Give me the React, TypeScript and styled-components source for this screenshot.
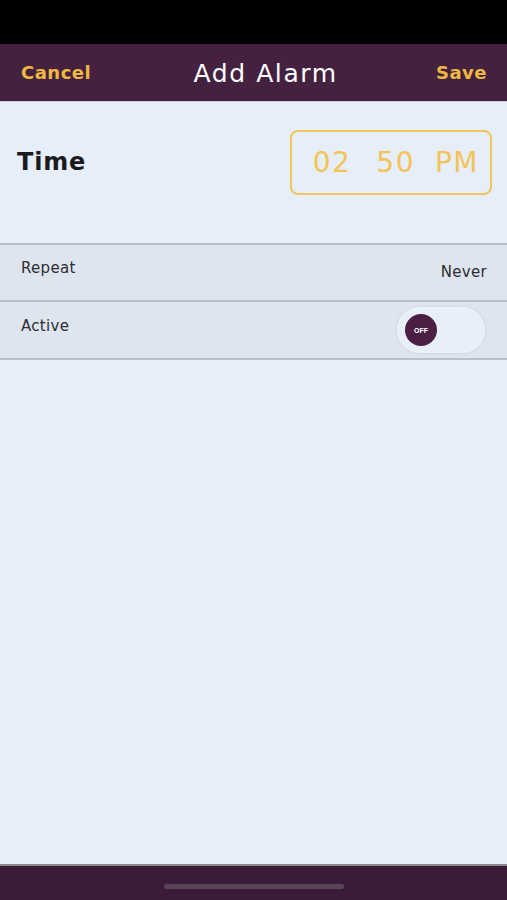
import React, { useState } from 'react'
import styled, { createGlobalStyle } from 'styled-components'

const GlobalStyle = createGlobalStyle`
  html, body {
    margin: 0;
    padding: 0;
    background: #e6eefa;
  }
  body {
    font-family: "DejaVu Sans", "Open Sans", sans-serif;
  }
`

const Screen = styled.div`
  width: 507px;
  height: 900px;
  display: flex;
  flex-direction: column;
  background: #e6eefa;
`

const StatusBar = styled.div`
  height: 44px;
  background: #000;
`

const Header = styled.div`
  height: 57px;
  background: #44223f;
  display: flex;
  align-items: center;
  justify-content: space-between;
  padding: 0 20px 0 21px;
  border-bottom: 1px solid #cfcfd6;
`

const HeaderButton = styled.span`
  color: #eeb843;
  font-size: 18px;
  font-weight: 700;
  letter-spacing: 0.5px;
`

const Title = styled.span`
  color: #fff;
  font-size: 25px;
  font-weight: 500;
  letter-spacing: 1.6px;
  margin-left: 4px;
  margin-top: 1px;
`

const Content = styled.div`
  flex: 1;
  display: flex;
  flex-direction: column;
`

const TimeRow = styled.div`
  height: 141px;
  display: flex;
  align-items: flex-start;
  justify-content: space-between;
  padding: 28px 15px 0 17px;
  box-sizing: border-box;
`

const TimeLabel = styled.span`
  font-size: 24px;
  font-weight: 700;
  color: #1b1b1f;
  margin-top: 18px;
  letter-spacing: 0.8px;
`

const TimeBox = styled.div`
  width: 202px;
  height: 65px;
  box-sizing: border-box;
  border: 2px solid #f2c45a;
  border-radius: 8px;
  display: flex;
  align-items: center;
  justify-content: flex-end;
  padding-right: 11px;
  color: #f3c355;
  font-family: "DejaVu Sans", sans-serif;
  font-size: 28px;
  font-weight: 400;
  letter-spacing: 1.5px;
`

const TimePart = styled.span<{ $gap?: number }>`
  margin-right: ${p => p.$gap ?? 0}px;
`

const SettingRow = styled.div`
  height: 57px;
  display: flex;
  align-items: center;
  justify-content: space-between;
  padding: 0 20px 0 21px;
  background: #dfe5ef;
  border-top: 2px solid #b9bfc8;
  box-sizing: border-box;
  &:last-child {
    border-bottom: 2px solid #b9bfc8;
    height: 60px;
  }
`

const RowLabel = styled.span<{ $offset?: number }>`
  font-size: 15px;
  color: #2d2d33;
  letter-spacing: 0.3px;
  transform: translateY(${p => p.$offset ?? 0}px);
`

const Toggle = styled.button`
  width: 88px;
  height: 46px;
  border: none;
  border-radius: 23px;
  background: #e9eff9;
  box-shadow: 0 0 3px rgba(0, 0, 0, 0.12), inset 0 0 2px rgba(255, 255, 255, 0.9);
  padding: 0 0 0 8px;
  display: flex;
  align-items: center;
  margin-right: 2px;
  cursor: pointer;
`

const Knob = styled.span`
  width: 32px;
  height: 32px;
  border-radius: 50%;
  background: #4a1f43;
  color: #fff;
  font-family: "Liberation Sans", sans-serif;
  font-size: 7px;
  font-weight: 700;
  display: flex;
  align-items: center;
  justify-content: center;
`

const BottomBar = styled.div`
  height: 34px;
  background: #3a1c38;
  border-top: 2px solid #8a8a8f;
  display: flex;
  align-items: center;
  justify-content: center;
`

const HomeIndicator = styled.div`
  width: 180px;
  height: 5px;
  border-radius: 3px;
  background: #5b4659;
  margin-top: 6px;
`

export default function App() {
  const [active, setActive] = useState(false)
  return (
    <>
      <GlobalStyle />
      <Screen>
        <StatusBar />
        <Header>
          <HeaderButton>Cancel</HeaderButton>
          <Title>Add Alarm</Title>
          <HeaderButton>Save</HeaderButton>
        </Header>
        <Content>
          <TimeRow>
            <TimeLabel>Time</TimeLabel>
            <TimeBox>
              <TimePart $gap={25}>02</TimePart>
              <TimePart $gap={20}>50</TimePart>
              <TimePart>PM</TimePart>
            </TimeBox>
          </TimeRow>
          <div>
            <SettingRow>
              <RowLabel $offset={-5}>Repeat</RowLabel>
              <RowLabel $offset={-1}>Never</RowLabel>
            </SettingRow>
            <SettingRow>
              <RowLabel $offset={-4}>Active</RowLabel>
              <Toggle onClick={() => setActive(!active)}>
                <Knob>{active ? 'ON' : 'OFF'}</Knob>
              </Toggle>
            </SettingRow>
          </div>
        </Content>
        <BottomBar>
          <HomeIndicator />
        </BottomBar>
      </Screen>
    </>
  )
}
